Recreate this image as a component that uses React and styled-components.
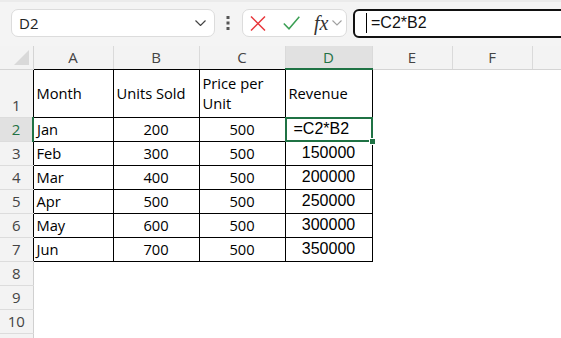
import React from 'react';
import styled, { createGlobalStyle } from 'styled-components';

const GREEN = '#1f7244';

const GlobalStyle = createGlobalStyle`
  html, body {
    margin: 0;
    padding: 0;
    background: #fff;
    overflow: hidden;
  }
  body {
    font-family: "Open Sans", "Liberation Sans", sans-serif;
    color: #000;
  }
`;

const columns = ['A', 'B', 'C', 'D', 'E', 'F', 'G'];
const widths = [33, 80, 86, 86, 87, 80, 80, 80];

const data = [
  ['Month', 'Units Sold', 'Price per Unit', 'Revenue'],
  ['Jan', '200', '500', '=C2*B2'],
  ['Feb', '300', '500', '150000'],
  ['Mar', '400', '500', '200000'],
  ['Apr', '500', '500', '250000'],
  ['May', '600', '500', '300000'],
  ['Jun', '700', '500', '350000'],
];

const App = () => {
  // 10 numbered rows, plus the top of row 11 that peeks in at the bottom edge
  const rows = Array.from({ length: 11 }, (_, i) => i + 1);

  return (
    <>
      <GlobalStyle />
      <Page>
        <Toolbar>
          <NameBox>
            <span>D2</span>
            <svg width="11" height="6" viewBox="0 0 11 6">
              <path d="M0.5 0.5 L5.5 5.5 L10.5 0.5" fill="none" stroke="#444" strokeWidth="1.2" />
            </svg>
          </NameBox>
          <Dots width="4" height="14" viewBox="0 0 4 14">
            <rect x="0.5" y="0" width="3" height="3" fill="#555" />
            <rect x="0.5" y="5.5" width="3" height="3" fill="#555" />
            <rect x="0.5" y="11" width="3" height="3" fill="#555" />
          </Dots>
          <FuncBox>
            <svg width="16" height="15" viewBox="0 0 16 15">
              <path d="M1 0.5 L15 14.5 M15 0.5 L1 14.5" stroke="#e8383d" strokeWidth="1.5" fill="none" />
            </svg>
            <svg width="17" height="14" viewBox="0 0 17 14">
              <path d="M0.8 7.5 L6 12.8 L16.3 0.8" stroke="#3b9f54" strokeWidth="1.5" fill="none" />
            </svg>
            <Fx>fx</Fx>
            <svg width="10" height="6" viewBox="0 0 10 6">
              <path d="M0.5 0.5 L5 5 L9.5 0.5" fill="none" stroke="#a0a0a0" strokeWidth="1.1" />
            </svg>
          </FuncBox>
          <FormulaBox>
            <Caret />
            <FormulaText>=C2*B2</FormulaText>
          </FormulaBox>
        </Toolbar>

        <Sheet>
          <colgroup>
            {widths.map((w, i) => (
              <col key={i} style={{ width: w }} />
            ))}
          </colgroup>
          <thead>
            <HeadRow>
              <Corner>
                <svg width="16" height="16" viewBox="0 0 16 16">
                  <path d="M15 0 L15 15 L0 15 Z" fill="#d9d9d9" />
                </svg>
              </Corner>
              {columns.map((c, i) => (
                <ColHead key={c} $active={c === 'D'} $boxed={i < 4}>
                  {c}
                </ColHead>
              ))}
            </HeadRow>
          </thead>
          <tbody>
            {rows.map(r => {
              const values = data[r - 1];
              return (
                <Row key={r} $tall={r === 1}>
                  <RowHead $active={r === 2} $boxed={!!values} $bottom={r === 1}>
                    {r <= 10 ? r : ''}
                  </RowHead>
                  {columns.map((c, ci) => {
                    const v = values && ci < 4 ? values[ci] : '';
                    const boxed = !!values && ci < 4;
                    const isRevenue = ci === 3 && r > 1;
                    let align = 'left';
                    if (r > 1 && (ci === 1 || ci === 2)) align = 'center';
                    if (isRevenue && r > 2) align = 'center';
                    return (
                      <Cell
                        key={c}
                        $boxed={boxed}
                        $align={align}
                        $arial={isRevenue}
                        $selected={r === 2 && c === 'D'}
                      >
                        {v}
                      </Cell>
                    );
                  })}
                </Row>
              );
            })}
          </tbody>
        </Sheet>
      </Page>
    </>
  );
};

export default App;

const Page = styled.div`
  width: 561px;
  height: 338px;
  overflow: hidden;
`;

const Toolbar = styled.div`
  display: flex;
  align-items: center;
  height: 46px;
  box-sizing: border-box;
  padding: 7px 0 9px 11px;
  background: #f4f4f4;
  border-top: 2px solid #ebebeb;
`;

const NameBox = styled.div`
  display: flex;
  align-items: center;
  justify-content: space-between;
  box-sizing: border-box;
  width: 204px;
  height: 28px;
  padding: 0 8px 0 7px;
  background: #fff;
  border: 1px solid #dcdcdc;
  border-radius: 7px;
  font-size: 15px;
  color: #222;
`;

const Dots = styled.svg`
  margin-left: 11px;
`;

const FuncBox = styled.div`
  display: flex;
  align-items: center;
  box-sizing: border-box;
  width: 105px;
  height: 28px;
  margin-left: 12px;
  padding: 0 0 0 7px;
  background: #fff;
  border: 1px solid #dcdcdc;
  border-radius: 7px;

  & > svg:nth-child(2) {
    margin-left: 17px;
  }
  & > svg:last-child {
    margin-left: 4px;
  }
`;

const Fx = styled.span`
  margin-left: 14px;
  font-family: "Liberation Serif", "DejaVu Serif", serif;
  font-style: italic;
  font-size: 20px;
  line-height: 1;
  color: #333;
`;

const FormulaBox = styled.div`
  display: flex;
  align-items: center;
  flex: 1;
  box-sizing: border-box;
  height: 29px;
  margin-left: 6px;
  margin-right: -12px;
  padding-left: 11px;
  background: #fff;
  border: 2px solid #111;
  border-radius: 6px;
`;

const Caret = styled.span`
  width: 1px;
  height: 20px;
  background: #000;
`;

const FormulaText = styled.span`
  margin-left: 4px;
  font-family: "Liberation Sans", Arial, sans-serif;
  font-size: 16px;
  color: #111;
`;

const Sheet = styled.table`
  table-layout: fixed;
  border-collapse: collapse;
  width: 612px;
`;

const HeadRow = styled.tr`
  height: 23px;
  background: #f3f3f3;
`;

const Corner = styled.th`
  position: relative;
  padding: 0;
  border-right: 1px solid #d4d4d4;
  border-bottom: 1px solid #d4d4d4;

  svg {
    position: absolute;
    right: 3px;
    bottom: 3px;
  }
`;

const ColHead = styled.th`
  padding: 0;
  font-weight: 400;
  font-size: 15px;
  color: ${p => (p.$active ? GREEN : '#444')};
  background: ${p => (p.$active ? '#e1e1e1' : '#f3f3f3')};
  border-right: 1px solid #dadada;
  border-bottom: ${p =>
    p.$active ? `2px solid ${GREEN}` : p.$boxed ? '1px solid #000' : '1px solid #d4d4d4'};
`;

const Row = styled.tr`
  height: ${p => (p.$tall ? '48px' : '24px')};
`;

const RowHead = styled.th`
  padding: 0 0 ${p => (p.$bottom ? '2px' : '0')};
  font-weight: 400;
  font-size: 15px;
  line-height: 20px;
  vertical-align: ${p => (p.$bottom ? 'bottom' : 'middle')};
  color: ${p => (p.$active ? GREEN : '#444')};
  background: ${p => (p.$active ? '#e1e1e1' : '#f3f3f3')};
  border-bottom: 1px solid #dcdcdc;
  border-right: ${p =>
    p.$active ? `2px solid ${GREEN}` : p.$boxed ? '1px solid #000' : '1px solid #d0d0d0'};
`;

const Cell = styled.td`
  position: relative;
  padding: ${p => (p.$selected ? '0 0 0 8px' : '0 3px')};
  font-family: ${p =>
    p.$arial ? '"Liberation Sans", Arial, sans-serif' : '"Open Sans", "Liberation Sans", sans-serif'};
  font-size: ${p => (p.$arial ? '16px' : '14.7px')};
  line-height: 20px;
  text-align: ${p => p.$align};
  vertical-align: middle;
  white-space: normal;
  color: #000;
  border: ${p => (p.$boxed ? '1px solid #000' : 'none')};

  ${p =>
    p.$selected &&
    `
    &::after {
      content: '';
      position: absolute;
      inset: -1px;
      border: 2px solid ${GREEN};
      pointer-events: none;
    }
    &::before {
      content: '';
      position: absolute;
      right: -4px;
      bottom: -4px;
      width: 5px;
      height: 5px;
      background: ${GREEN};
      border: 1px solid #fff;
      z-index: 1;
    }
  `}
`;
